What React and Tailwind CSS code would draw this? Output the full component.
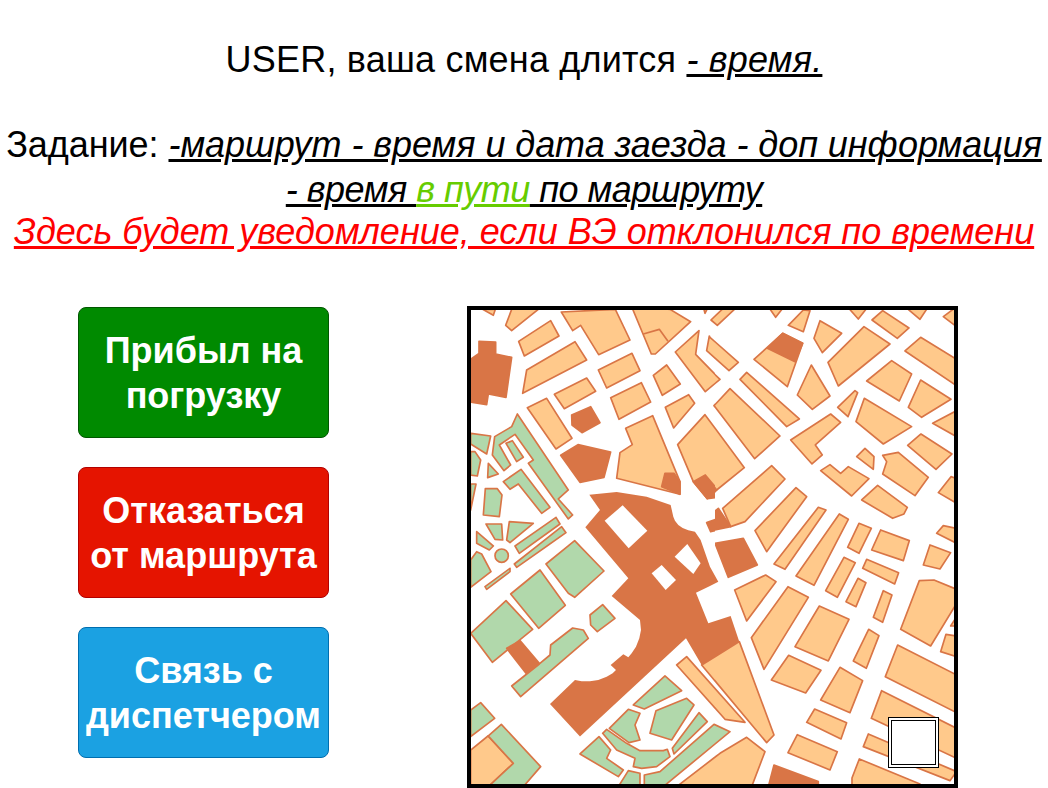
import React from "react";

const ORANGE = "#ffc98b";
const DARK = "#d97546";
const GREEN = "#b1d8ab";

// polygon coords are read off 3x crops, one list per quadrant of the map
const quadrants = [
  {
    id: "q1", x: 460, y: 300, clip: [460, 300, 255, 245],
    orange: [
      "68,28 106,28 100,46", "158,20 245,20 155,92 137,76", "176,124 272,62 297,108 193,168",
      "345,125 380,180 188,280 200,210", "304,36 466,28 510,120 416,164 362,76 338,92",
      "515,20 630,28 692,65 586,162 574,162", "415,210 516,160 540,212 440,264",
      "283,283 380,234 407,274 313,326", "202,323 260,295 336,415 288,447",
      "452,293 544,248 572,306 477,358", "580,226 620,195 661,252 607,286",
      "616,322 686,284 704,310 641,384", "646,156 717,92 707,163 780,238 736,275",
      "750,112 835,187 807,212 740,152 748,108", "762,317 810,266 960,408 884,476",
      "653,434 735,344 853,503 770,570 742,596 700,545",
      "497,385 578,347 660,545 660,583 470,535 480,458 517,434",
      "730,20 745,20 735,40", "753,60 795,20 832,20 772,76",
    ],
    dark: [
      "57,124 107,126 107,162 155,172 138,292 85,282 80,314 32,306 32,178 57,160",
      "335,345 392,320 420,368 366,398 336,375", "302,466 354,434 452,456 432,532 360,547",
      "700,545 736,525 790,590 742,596", "605,560 615,520 642,520 660,545 660,583",
      "740,668 775,655 775,628 812,680 752,695",
    ],
    green: [
      "32,400 92,408 80,462 32,432", "32,455 45,455 62,480 52,528 32,525",
      "97,465 104,410 155,380 172,342 325,570 295,597 338,645 325,657 205,490 220,480 165,403 118,435 152,495 132,512",
      "138,430 157,422 190,472 170,485", "130,545 183,508 270,622 245,640 175,552 150,568",
      "85,490 115,522 83,533", "32,552 48,552 32,630", "76,566 112,566 126,585 118,650 70,645",
      "78,672 125,672 128,720 105,718", "148,665 220,670 150,728 140,720",
      "50,695 100,738 88,750 50,730", "165,738 288,652 300,672 178,760",
      "163,792 305,680 318,698 170,802", "258,792 344,722 432,813 344,892",
    ],
    lines: ["550,102 598,88 624,124"],
  },
  {
    id: "q2", x: 710, y: 300, clip: [715, 300, 255, 245],
    orange: [
      "3,60 45,20 82,20 22,76", "0,112 85,187 57,212 -10,152", "-50,163 30,238 -14,275",
      "12,317 60,266 210,408 134,476", "-97,344 -15,344 103,503 20,570 -8,596 -50,545",
      "175,20 222,20 197,52", "235,76 280,30 300,32 280,95", "312,115 330,62 395,100 337,158",
      "132,178 218,100 278,130 232,260", "354,187 462,80 540,132 385,258",
      "262,285 304,195 360,288 307,328", "90,238 110,217 268,357 230,380",
      "412,20 474,20 445,57", "486,60 518,32 597,84 562,115", "585,20 655,20 630,58",
      "700,50 740,20 740,80", "585,153 632,112 740,178 740,257", "470,243 545,182 605,222 568,303",
      "595,322 632,240 723,298 635,352", "668,370 740,332 740,410", "383,322 435,272 443,278 414,350",
      "438,365 463,295 605,380 520,432", "593,436 633,402 726,462 678,508",
      "242,420 362,342 392,367 316,435 337,465 306,492", "440,470 465,445 492,470 490,508",
      "518,466 565,457 655,532 615,587 518,522 530,485",
      "332,512 360,494 392,520 415,500 477,536 425,588",
      "455,600 503,556 592,622 582,642 548,655", "685,578 723,530 740,535 740,610",
      "135,692 258,563 290,590 170,755", "192,792 325,622 348,630 225,808",
      "258,828 388,642 415,658 312,856", "413,742 447,670 484,685 447,760",
      "485,750 512,690 598,722 580,782", "680,700 700,677 740,685 740,730",
      "640,795 660,735 722,758 690,807", "38,625 185,497 225,537 105,665 62,680",
    ],
    dark: [
      "172,145 218,100 278,130 255,185", "0,545 20,570 0,590 -10,590",
      "-10,655 25,625 62,680 -10,695", "15,730 100,715 142,795 55,832",
    ],
    green: [],
    lines: [],
  },
  {
    id: "q3", x: 460, y: 540, clip: [460, 545, 255, 250],
    orange: [
      "32,630 84,588 160,670 85,740 32,740", "650,375 680,350 855,547 795,538",
      "725,375 838,305 942,585 920,608", "650,740 780,640 860,592 915,635 875,740",
    ],
    dark: ["140,325 180,302 238,370 198,400"],
    green: [
      "50,-25 100,18 88,30 50,10", "32,60 50,35 65,42 93,95 32,142", "75,140 150,85 150,95 80,148",
      "165,18 288,-68 300,-48 178,40", "163,72 305,-40 318,-22 170,82",
      "258,72 344,2 432,93 344,172 325,160", "152,162 240,90 316,196 236,265",
      "32,280 138,182 218,268 97,367", "155,438 238,372 270,345 272,315 338,264 370,270 385,295 182,470",
      "390,225 428,194 465,235 412,275 392,255", "32,510 62,488 104,535 32,590",
      "85,588 124,553 242,680 190,740 85,740 160,670", "520,495 615,408 665,452 553,507",
      "448,565 505,508 540,520 525,555 540,600 507,608", "588,512 680,475 702,495 635,600 570,580",
      "637,625 717,518 742,545 642,642",
      "428,580 440,568 500,610 540,632 610,632 622,628 630,650 590,680 545,685 520,680 525,655 470,630",
      "360,642 417,590 452,630 440,655 490,690 475,710", "475,740 505,692 540,700 540,740",
      "553,740 553,705 600,695 762,553 810,575 610,740",
    ],
    circle: [125, 47, 20],
    lines: [],
  },
  {
    id: "q4", x: 710, y: 540, clip: [715, 545, 255, 250],
    orange: [
      "135,-28 258,-157 290,-130 170,35", "192,72 325,-98 348,-90 225,88", "258,108 388,-78 415,-62 312,136",
      "347,152 402,52 436,68 382,172", "413,22 447,-50 484,-35 447,40", "485,30 512,-30 598,2 580,62",
      "640,75 660,15 722,38 690,87", "458,85 470,58 566,98 554,132", "408,185 444,115 468,128 438,200",
      "490,232 520,152 546,165 518,247", "572,268 628,122 672,120 740,148 740,190 662,318",
      "722,258 740,230 740,258", "692,335 708,283 740,288 740,350", "74,150 167,105 198,125 110,243",
      "124,293 234,140 295,172 162,388", "255,320 328,198 417,238 355,363", "430,363 476,268 507,287 469,385",
      "184,420 236,346 333,391 287,459", "332,480 390,382 458,422 420,518", "526,410 563,315 740,405 740,518",
      "484,535 515,452 740,565 740,655", "290,547 314,507 410,548 393,597", "234,638 262,584 382,635 360,690",
      "460,620 475,582 740,695 720,722", "426,714 448,657 630,732 620,745 426,745",
      "-100,375 -70,350 105,547 45,538", "-25,375 88,305 192,585 170,608",
      "-100,740 30,640 110,592 165,635 125,740",
    ],
    dark: ["15,10 100,-5 142,75 55,112", "175,740 192,675 325,725 325,740"],
    green: ["-197,740 -197,705 -150,695 12,553 60,575 -140,740"],
    lines: [],
  },
];

// plaza crosses all quadrants, coords in the first crop's space
const plaza =
  "388,584 470,576 560,590 632,615 640,650 645,662 655,675 668,684 685,691 705,695 722,720 750,800 775,845 750,858 708,878 745,970 812,948 838,1025 725,1095 678,1015 360,1310 270,1212 345,1140 365,1144 390,1144 415,1140 440,1130 458,1120 468,1110 452,1095 490,1063 505,1072 515,1060 528,1040 538,1015 543,990 540,960 455,888 505,835 376,682 420,630";
const plazaHoles = [
  "434,662 488,616 562,692 506,745",
  "575,820 605,795 648,840 617,870",
  "644,770 682,732 722,790 700,822",
];

function Quadrant({ q }) {
  const stroke = { stroke: DARK, strokeWidth: 5, strokeLinejoin: "round" };
  return (
    <g clipPath={`url(#${q.id})`}>
      <g transform={`translate(${q.x} ${q.y}) scale(0.3333)`}>
        {q.orange.map((p) => <polygon key={p} points={p} fill={ORANGE} {...stroke} />)}
        {q.green.map((p) => <polygon key={p} points={p} fill={GREEN} {...stroke} />)}
        {q.dark.map((p) => <polygon key={p} points={p} fill={DARK} {...stroke} />)}
        {q.lines.map((p) => <polyline key={p} points={p} fill="none" {...stroke} />)}
        {q.circle && <circle cx={q.circle[0]} cy={q.circle[1]} r={q.circle[2]} fill={GREEN} {...stroke} />}
      </g>
    </g>
  );
}

function MapPicture() {
  return (
    <svg viewBox="471 310 483 474" className="block w-full h-full">
      <defs>
        {quadrants.map((q) => (
          <clipPath key={q.id} id={q.id}>
            <rect x={q.clip[0]} y={q.clip[1]} width={q.clip[2]} height={q.clip[3]} />
          </clipPath>
        ))}
      </defs>
      <g transform="translate(460 300) scale(0.3333)">
        <polygon points={plaza} fill={DARK} />
        {plazaHoles.map((p) => <polygon key={p} points={p} fill="#fff" />)}
      </g>
      {quadrants.map((q) => <Quadrant key={q.id} q={q} />)}
    </svg>
  );
}

function ActionButton({ className, children }) {
  return (
    <button className={`w-[251px] h-[131px] rounded-lg border text-white font-bold text-[36px] leading-[45px] ${className}`}>
      {children}
    </button>
  );
}

export default function App() {
  return (
    <div className="w-[1048px] h-[788px] overflow-hidden bg-white text-black font-['Liberation_Sans',sans-serif]">
      <div className="text-center text-[36px] leading-[45px] whitespace-nowrap">
        <p className="pt-[37px] tracking-[0.2px]">
          USER, ваша смена длится <em className="underline">- время.</em>
        </p>
        <p className="mt-[40px] tracking-[-0.05px]">
          Задание: <em className="underline">-маршрут - время и дата заезда - доп информация</em>
        </p>
        <p>
          <em className="tracking-[-0.5px]">
            <span className="underline">- время </span>
            <span className="underline text-[#66cc00]">в пути</span>
            <span className="underline"> по маршруту</span>
          </em>
        </p>
        <p className="-mt-[3px]">
          <em className="underline text-[#ff0000]">Здесь будет уведомление, если ВЭ отклонился по времени</em>
        </p>
      </div>

      <div className="flex items-start mt-[52px] ml-[78px]">
        <div className="flex flex-col gap-[29px] mt-[1px]">
          <ActionButton className="bg-[#008a00] border-[#005700]">Прибыл на погрузку</ActionButton>
          <ActionButton className="bg-[#e51400] border-[#b20000]">Отказаться от маршрута</ActionButton>
          <ActionButton className="bg-[#1ba1e2] border-[#006eaf]">Связь с диспетчером</ActionButton>
        </div>
        <div className="relative ml-[138px] w-[491px] h-[482px] border-4 border-black">
          <MapPicture />
          <div className="absolute left-[417px] top-[407px] w-[51px] h-[51px] bg-white border-4 border-double border-black" />
        </div>
      </div>
    </div>
  );
}
